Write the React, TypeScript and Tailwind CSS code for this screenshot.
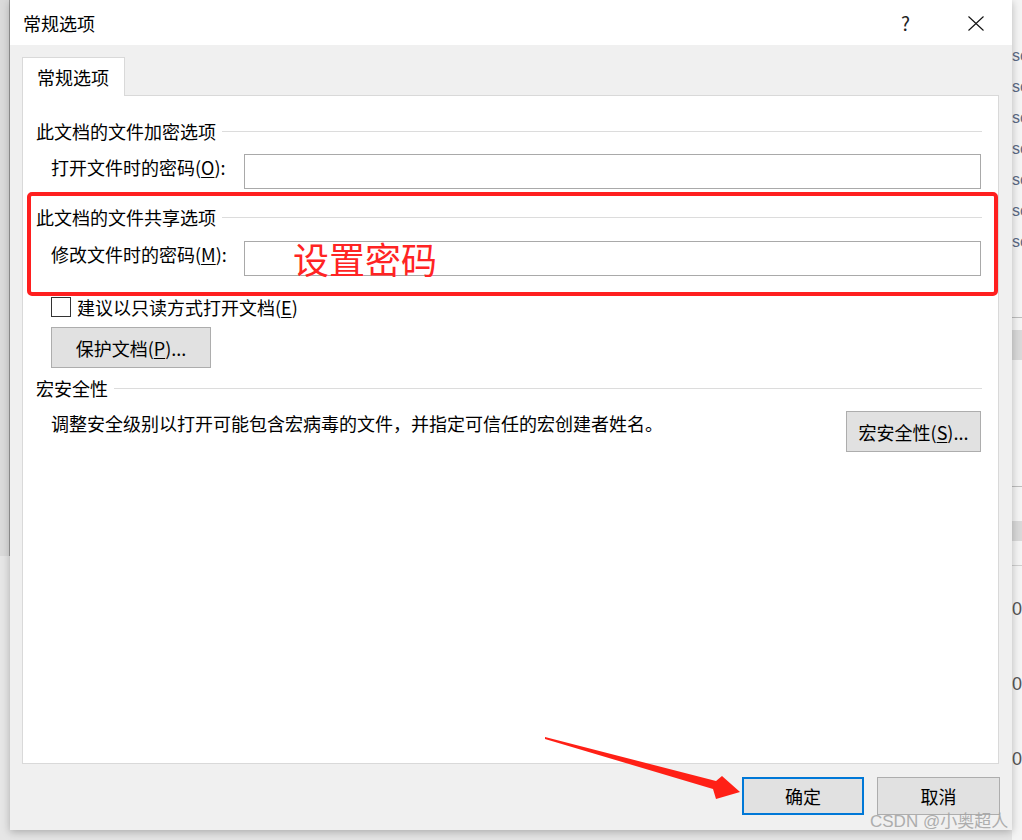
import React from 'react';

const font = { fontFamily: '"Noto Sans CJK SC", "Noto Sans", sans-serif' };

function SectionHeading({ text }: { text: string }) {
  return (
    <div className="flex items-center h-[24px] leading-[24px]">
      <span>{text}</span>
      <div className="flex-1 h-px bg-[#dcdcdc] ml-[6px]" />
    </div>
  );
}

function PasswordRow({ label, keyChar }: { label: string; keyChar: string }) {
  return (
    <div className="flex items-start pl-[15px]">
      <div className="w-[193px] mt-px h-[24px] leading-[24px]">
        {label}(<span className="underline underline-offset-2">{keyChar}</span>):
      </div>
      <div className="w-[737px] h-[35px] border border-[#a9a9a9] bg-white" />
    </div>
  );
}

export default function App() {
  return (
    <div
      className="relative w-[1022px] h-[840px] overflow-hidden bg-[#e4e4e4] flex text-[18px] text-black"
      style={font}
    >
      {/* left background strip */}
      <div className="w-[10px] h-full flex flex-col">
        <div className="h-[556px] bg-[#dadada] border-r border-[#9a9a9a]" />
        <div className="flex-1 bg-[#e6e6e6]" />
      </div>

      {/* dialog */}
      <div className="w-[1002px] h-[830px] bg-[#f0f0f0] flex flex-col shadow-[0_2px_8px_rgba(0,0,0,0.25)] z-10">
        {/* title bar */}
        <div className="h-[45px] bg-white flex items-center pl-[13px] pr-[28px] shrink-0">
          <span className="leading-[24px]">常规选项</span>
          <span className="ml-auto text-[#222] text-[19px] leading-none mr-[58px]">?</span>
          <svg width="16" height="15" viewBox="0 0 16 15" className="mt-[1px]">
            <path d="M0.5 0.5 L15.5 14.5 M15.5 0.5 L0.5 14.5" stroke="#111" strokeWidth="1.1" fill="none" />
          </svg>
        </div>

        {/* body */}
        <div className="px-[12px] pt-[12px] flex flex-col">
          <div className="relative z-10 w-[103px] h-[39px] -mb-px bg-white border border-b-0 border-[#d9d9d9] pl-[14px] leading-[39px]">
            常规选项
          </div>
          <div className="w-[977px] h-[669px] bg-white border border-[#d9d9d9] pt-[23px] pl-[13px] pr-[16px]">
            <SectionHeading text="此文档的文件加密选项" />
            <div className="mt-[11px]">
              <PasswordRow label="打开文件时的密码" keyChar="O" />
            </div>
            <div className="mt-[16px]">
              <SectionHeading text="此文档的文件共享选项" />
            </div>
            <div className="mt-[12px]">
              <PasswordRow label="修改文件时的密码" keyChar="M" />
            </div>

            <div className="mt-[19px] pl-[15px] flex items-center h-[24px] leading-[24px]">
              <div className="w-[20px] h-[20px] border border-[#333] bg-white" />
              <span className="ml-[6px]">
                建议以只读方式打开文档(<span className="underline underline-offset-2">E</span>)
              </span>
            </div>

            <div className="mt-[8px] pl-[15px]">
              <div className="w-[160px] h-[41px] bg-[#e1e1e1] border border-[#adadad] flex items-center justify-center leading-[24px]">
                保护文档(<span className="underline underline-offset-2">P</span>)...
              </div>
            </div>

            <div className="mt-[8px]">
              <SectionHeading text="宏安全性" />
            </div>

            <div className="mt-[11px] pl-[15px] flex items-start">
              <span className="h-[24px] leading-[24px]">
                调整安全级别以打开可能包含宏病毒的文件，并指定可信任的宏创建者姓名。
              </span>
              <div className="ml-auto mr-px w-[135px] h-[41px] bg-[#e1e1e1] border border-[#adadad] flex items-center justify-center leading-[24px]">
                宏安全性(<span className="underline underline-offset-2">S</span>)...
              </div>
            </div>
          </div>
        </div>

        {/* footer */}
        <div className="flex justify-end gap-[13px] pr-[12px] mt-[13px]">
          <div className="w-[122px] h-[38px] bg-[#e1e1e1] border-2 border-[#0078d7] flex items-center justify-center leading-[24px]">
            确定
          </div>
          <div className="w-[123px] h-[38px] bg-[#e1e1e1] border border-[#adadad] flex items-center justify-center leading-[24px]">
            取消
          </div>
        </div>
      </div>

      {/* right background strip */}
      <div className="w-[10px] h-full bg-[#f4f4f4] flex flex-col overflow-hidden text-[#5a6a85] text-[16px] leading-[31px]" style={{ fontFamily: '"Liberation Sans", sans-serif' }}>
        <div className="h-[40px]" />
        <div>sc</div>
        <div>sc</div>
        <div>sc</div>
        <div>sc</div>
        <div>sc</div>
        <div>sc</div>
        <div>sc</div>
        <div className="h-[20px]" />
        <div className="h-px bg-[#bdbdbd] mt-[40px]" />
        <div className="h-[30px] bg-[#d9d9d9] mt-[12px]" />
        <div className="h-px bg-[#bdbdbd] mt-[126px]" />
        <div className="h-[20px] bg-[#d9d9d9] mt-[34px]" />
        <div className="h-px bg-[#cfcfcf] mt-[24px]" />
        <div className="mt-[28px] text-[#555] text-[18px]">02</div>
        <div className="mt-[44px] text-[#555] text-[18px]">02</div>
        <div className="mt-[44px] text-[#555] text-[18px]">02</div>
      </div>

      {/* annotations */}
      <div className="absolute left-[27px] top-[192px] w-[971px] h-[104px] border-[4px] border-[#ff1f1f] rounded-[5px] z-20" />
      <div className="absolute left-[293px] top-[240px] text-[36px] leading-none text-[#ff2424] z-20">
        设置密码
      </div>
      <svg className="absolute left-0 top-0 z-20" width="1022" height="840" viewBox="0 0 1022 840">
        <polygon
          points="545,737 716,781 722,776 740,792 716,799 713,789 545,739"
          fill="#ff2016"
        />
      </svg>
      <div
        className="absolute left-[870px] top-[808px] text-[17px] leading-[28px] text-[#a6a6a6] opacity-90 z-20"
        style={{ fontFamily: '"Liberation Sans", "Noto Sans CJK SC", sans-serif' }}
      >
        CSDN @小奥超人
      </div>
    </div>
  );
}
